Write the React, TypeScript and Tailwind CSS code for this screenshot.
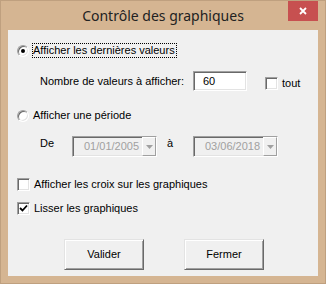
import React from 'react';

const sunken =
  'border border-t-[#a0a0a0] border-l-[#a0a0a0] border-r-white border-b-white shadow-[inset_1px_1px_#696969,inset_-1px_-1px_#e3e3e3]';
const raised =
  'border border-t-[#e3e3e3] border-l-[#e3e3e3] border-r-[#696969] border-b-[#696969] shadow-[inset_1px_1px_#ffffff,inset_-1px_-1px_#a0a0a0]';

const Radio: React.FC<{ checked?: boolean }> = ({ checked }) => (
  <span className={`flex h-[12px] w-[12px] shrink-0 items-center justify-center rounded-full bg-white ${sunken}`}>
    {checked && <span className="h-[4px] w-[4px] rounded-full bg-black" />}
  </span>
);

const Check: React.FC<{ checked?: boolean }> = ({ checked }) => (
  <span className={`flex h-[13px] w-[13px] shrink-0 items-center justify-center bg-white ${sunken}`}>
    {checked && (
      <svg width="9" height="9" viewBox="0 0 9 9">
        <path d="M1 4 L3.5 6.5 L8 1.5" fill="none" stroke="#000" strokeWidth="1.8" />
      </svg>
    )}
  </span>
);

const Combo: React.FC<{ value: string }> = ({ value }) => (
  <div className={`flex h-[21px] w-[85px] bg-[#f0f0f0] ${sunken}`}>
    <span className="flex flex-1 items-center pl-[11px] text-[#a0a0a0]">{value}</span>
    <span className="flex h-full w-[14px] items-center justify-center border border-t-white border-l-white border-r-[#a0a0a0] border-b-[#a0a0a0] bg-[#f0f0f0]">
      <svg width="7" height="4" viewBox="0 0 7 4">
        <path d="M0 0 H7 L3.5 4 Z" fill="#a0a0a0" />
      </svg>
    </span>
  </div>
);

export default function App() {
  return (
    <div className="flex h-[284px] w-[326px] flex-col border border-[#bfa07f] bg-[#d5b592] font-['Liberation_Sans',Arial,sans-serif] text-[11px] leading-[13px] text-black">
      <div className="relative flex h-[29px] shrink-0 items-center justify-center">
        <span className="font-['Noto_Sans',sans-serif] text-[14px] text-[#222]">Contrôle des graphiques</span>
        <div className="absolute right-[7px] top-0 flex h-[20px] w-[30px] items-center justify-center bg-[#c75050]">
          <svg width="8" height="8" viewBox="0 0 8 8">
            <path d="M1 1 L7 7 M7 1 L1 7" stroke="#fff" strokeWidth="1.8" />
          </svg>
        </div>
      </div>

      <div className="mx-[7px] mb-[7px] flex flex-1 flex-col bg-[#f0f0f0]">
        <div className="mt-[13px] flex h-[15px] items-center pl-[9px]">
          <Radio checked />
          <span className="ml-[3px] h-[15px] border border-dotted border-black px-0 pr-[1px]">
            Afficher les dernières valeurs
          </span>
        </div>

        <div className="mt-[13px] flex h-[20px] items-center pl-[32px]">
          <span className="w-[153px]">Nombre de valeurs à afficher:</span>
          <div className={`flex h-[20px] w-[54px] items-center bg-white pl-[9px] ${sunken}`}>60</div>
          <div className="ml-[18px] mt-[5px] flex items-center">
            <Check />
            <span className="ml-[4px]">tout</span>
          </div>
        </div>

        <div className="mt-[17px] flex h-[15px] items-center pl-[9px]">
          <Radio />
          <span className="ml-[3px] h-[15px] border border-transparent">Afficher une période</span>
        </div>

        <div className="mt-[13px] flex h-[21px] items-start pl-[32px]">
          <span className="w-[32px] leading-[14px]">De</span>
          <Combo value="01/01/2005" />
          <span className="ml-[10px] w-[26px] leading-[14px]">à</span>
          <Combo value="03/06/2018" />
        </div>

        <div className="mt-[21px] flex h-[13px] items-center pl-[9px]">
          <Check />
          <span className="ml-[4px]">Afficher les croix sur les graphiques</span>
        </div>

        <div className="mt-[11px] flex h-[13px] items-center pl-[9px]">
          <Check checked />
          <span className="ml-[4px]">Lisser les graphiques</span>
        </div>

        <div className="mt-[24px] flex pl-[56px]">
          <button className={`h-[31px] w-[80px] bg-[#f0f0f0] ${raised}`}>Valider</button>
          <button className={`ml-[40px] h-[31px] w-[80px] bg-[#f0f0f0] ${raised}`}>Fermer</button>
        </div>
      </div>
    </div>
  );
}
